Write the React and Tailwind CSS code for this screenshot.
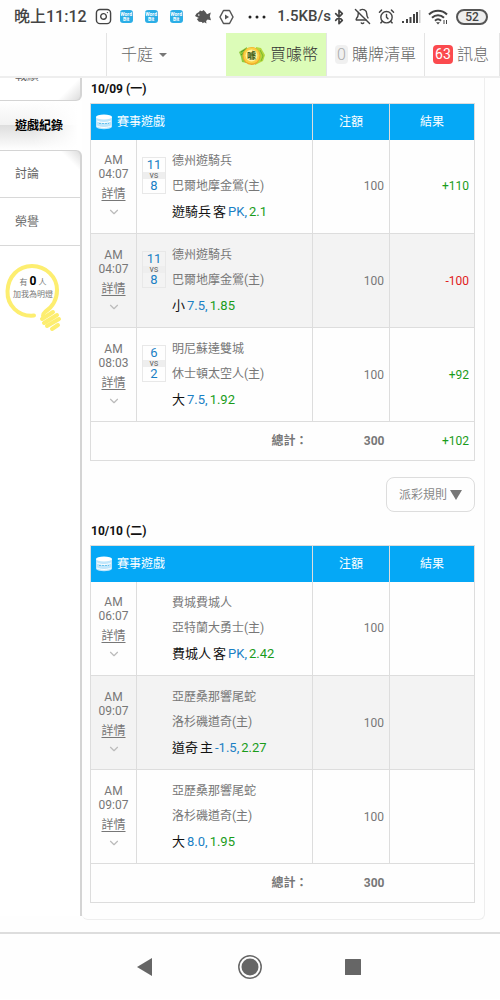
import React from 'react';
import { BellOff, AlarmClock, Bluetooth, ChevronDown, Instagram } from 'lucide-react';

const days = [
  {
    date: '10/09 (一)',
    total: '300',
    totalResult: '+102',
    rows: [
      { time: '04:07', score: ['11', '8'], away: '德州遊騎兵', home: '巴爾地摩金鶯(主)', team: '遊騎兵', pick: '客', line: 'PK,', odds: '2.1', amount: '100', result: '+110' },
      { time: '04:07', score: ['11', '8'], away: '德州遊騎兵', home: '巴爾地摩金鶯(主)', pick: '小', line: '7.5,', odds: '1.85', amount: '100', result: '-100' },
      { time: '08:03', score: ['6', '2'], away: '明尼蘇達雙城', home: '休士頓太空人(主)', pick: '大', line: '7.5,', odds: '1.92', amount: '100', result: '+92' },
    ],
  },
  {
    date: '10/10 (二)',
    total: '300',
    totalResult: '',
    rows: [
      { time: '06:07', away: '費城費城人', home: '亞特蘭大勇士(主)', team: '費城人', pick: '客', line: 'PK,', odds: '2.42', amount: '100', result: '' },
      { time: '09:07', away: '亞歷桑那響尾蛇', home: '洛杉磯道奇(主)', team: '道奇', pick: '主', line: '-1.5,', odds: '2.27', amount: '100', result: '' },
      { time: '09:07', away: '亞歷桑那響尾蛇', home: '洛杉磯道奇(主)', pick: '大', line: '8.0,', odds: '1.95', amount: '100', result: '' },
    ],
  },
];

const WordBit = () => (
  <span className="flex h-[13px] w-[13px] flex-col items-center justify-center rounded-[3px] bg-[#2caee6] text-[5px] font-bold leading-[5px] text-white">
    <span>Word</span>
    <span>Bit</span>
  </span>
);

const StatusBar = () => (
  <div className="flex h-[33px] items-center justify-between pl-3.5 pr-3 text-[#444]">
    <div className="flex items-center gap-2">
      <span className="text-base font-medium">晚上11:12</span>
      <Instagram size={17} strokeWidth={2} />
      <span className="flex items-center gap-3">
        <WordBit />
        <WordBit />
        <WordBit />
      </span>
      <svg width="16" height="14" viewBox="0 0 16 14" className="ml-1" fill="#555">
        <path d="M0 6 1.500 3.500 4 2 5 .5l2 .8L8.500 0l2 2 1.500 2.200 3.800-1.700-1 3.800 1.200 4-3.400-.7-1.500 1.300.4 2.600-2.200-1.200-1.600.9-.8-1.200-3-.3L1.800 9l2-1Z" />
        <circle cx="3.800" cy="5" r="0.800" fill="#fff" />
      </svg>
      <svg width="15" height="16" viewBox="0 0 15 16" fill="none" stroke="#555" strokeWidth="1.500" strokeLinejoin="round">
        <path d="M4.500 1.500h6L14 8l-3.500 6.500h-6L1 8Z" />
        <path d="M6 5.500v5L10 8Z" fill="#555" stroke="none" />
      </svg>
      <svg width="18" height="4" viewBox="0 0 18 4" className="ml-1.5" fill="#222">
        <circle cx="2" cy="2" r="1.500" />
        <circle cx="9" cy="2" r="1.500" />
        <circle cx="16" cy="2" r="1.500" />
      </svg>
    </div>
    <div className="flex items-center gap-[7px]">
      <span className="flex items-center text-[15px] font-medium">
        1.5KB/s
        <Bluetooth size={16} strokeWidth={2.5} />
      </span>
      <BellOff size={17} strokeWidth={2} />
      <AlarmClock size={17} strokeWidth={2} />
      <svg width="19" height="14" viewBox="0 0 19 14" fill="#444">
        <path d="M0 11h2v2H0zM4 9h2v4H4zM7.500 7h2v6h-2zM11 4h2v9h-2zM14 2h2v11h-2z" />
        <path d="M17 0h1.500v13H17z" fill="#ccc" />
      </svg>
      <svg width="21" height="16" viewBox="0 0 21 16" fill="none" stroke="#444" strokeWidth="2">
        <path d="M1 5.500c5-5 13-5 18 0M4 8.800c3.500-3.500 8.500-3.500 12 0M7 11.800c1.800-1.800 4.200-1.800 6 0" />
        <path d="M8 13.200h4L10 15.500Z" fill="#444" stroke="none" />
        <path d="M16 11v4M18.500 11v4" strokeWidth="1" />
      </svg>
      <span className="flex h-4 w-8 items-center justify-center rounded-full border-2 border-[#555] bg-[#eee] text-xs font-medium leading-none">
        52
      </span>
    </div>
  </div>
);

const Coin = () => (
  <svg width="28" height="24" viewBox="0 0 28 24">
    <path d="M1 9 9 4v16l-5-1-1-5Z" fill="#8fcb3f" />
    <path d="M3 9 8 6M3 12l4-3" stroke="#4f9a2a" />
    <path d="m18 4 5 1 4 7-2 6-8 4Z" fill="#b4d83c" />
    <path d="m22 7 3 6-2 5" fill="none" stroke="#7db52e" />
    <circle cx="13.500" cy="13" r="9" fill="#eda92a" />
    <circle cx="13.500" cy="12.500" r="8" fill="#fbd043" />
    <circle cx="13.500" cy="12.500" r="6" fill="#fff3a0" />
    <text x="13.500" y="16" textAnchor="middle" fontSize="9" fontWeight="700" fill="#44601c">噱</text>
  </svg>
);

const TopBar = () => (
  <header className="flex h-[45px] border-b-2 border-[#eee] text-base font-light text-[#666]">
    <div className="w-[107px] border-r border-[#e4e4e4]" />
    <button className="flex flex-1 items-center gap-1.5 pl-3.5">
      千庭
      <svg width="8" height="4" viewBox="0 0 8 4" fill="#777">
        <path d="M0 0h8L4 4Z" />
      </svg>
    </button>
    <a href="#coin" className="flex items-center gap-1 bg-[#dcfcb8] pl-3 pr-2 text-[#333]">
      <Coin />
      買噱幣
    </a>
    <a href="#cart" className="flex items-center gap-1 border-l border-[#e4e4e4] px-2">
      <span className="w-[13px] rounded-sm bg-[#f0f0f0] text-center leading-[19px] text-[#aaa]">0</span>
      購牌清單
    </a>
    <a href="#messages" className="flex items-center gap-1 border-x border-[#e4e4e4] pl-2 pr-2.5">
      <span className="w-5 rounded-sm bg-[#fb4a4e] text-center text-sm font-normal leading-[19px] text-white">63</span>
      訊息
    </a>
  </header>
);

const Lamp = () => (
  <div className="mt-[17px] grid w-[60px] pl-1">
    <svg width="58" height="70" viewBox="0 0 58 70" fill="none" stroke="#fdee70" strokeWidth="4" strokeLinecap="round" className="[grid-area:1/1]">
      <path d="M30 52.500C14 54 3 42 3.500 28 4 14 14 3 28 3s25 11 25 24c0 11-6 18-12 22-2 1.500-2 3-2 4" />
      <path d="m38 56 11-7M40 60l13-8M43 63l12-7M48 66l6-4" />
    </svg>
    <div className="pt-3 text-center text-[8px] leading-[12px] text-[#777] [grid-area:1/1]">
      <div>
        有 <b className="text-xs leading-[12px] text-black">0</b> 人
      </div>
      <div className="whitespace-nowrap">加我為明燈</div>
    </div>
  </div>
);

const Sidebar = () => (
  <nav className="flex w-[82px] shrink-0 flex-col text-xs text-[#666]">
    <div className="flex h-[23px] items-end overflow-hidden rounded-br-md border-b border-r-2 border-[#d4d4d4] bg-[linear-gradient(315deg,#ddd,#fff_16px)]">
      <a href="#record" className="flex h-12 shrink-0 items-center pl-[15px]">戰績</a>
    </div>
    <a
      href="#games"
      className="flex h-[49px] items-center bg-[linear-gradient(to_right,transparent_40%,#fff_95%),linear-gradient(#fff,#f2f2f2_48%,#dedede_50%,#fff)] pl-[15px] font-bold text-black"
    >
      遊戲紀錄
    </a>
    <div className="mb-1 flex-1 rounded-tr-md border-r-2 border-t border-[#d4d4d4] bg-[linear-gradient(225deg,#ddd,#fff_14px)]">
      <a href="#discuss" className="flex h-[47px] items-center border-b border-[#d8d8d8] pl-[15px]">討論</a>
      <a href="#honor" className="flex h-12 items-center border-b border-[#d8d8d8] pl-[15px]">榮譽</a>
      <Lamp />
    </div>
  </nav>
);

const GameIcon = () => (
  <svg width="16" height="16" viewBox="0 0 16 16">
    <path d="M0 3v10c2 3 14 3 16 0V3Z" fill="#bfe6fb" />
    <path d="M1 7c4 2 10 2 14 0M1 12c4 2 10 2 14 0" fill="none" stroke="#fff" />
    <path d="M3 9.500h10" stroke="#69c3ee" strokeDasharray="2 1" />
    <ellipse cx="8" cy="3" rx="8" ry="2.500" fill="#fff" />
  </svg>
);

const Score = ({ score }) => (
  <div className="w-6 border border-[#e8e8e8] text-center text-[13px] leading-[14px] text-[#1a80c4]">
    <div>{score[0]}</div>
    <div className="bg-[#eee] text-[9px] leading-[7px] text-[#666]">vs</div>
    <div>{score[1]}</div>
  </div>
);

const resultColor = (value) => (value.startsWith('-') ? 'text-[#e02020]' : 'text-[#1a9c1a]');

const DayTable = ({ day }) => (
  <section>
    <h2 className="mb-[3px] pl-px text-xs font-bold leading-[22px] text-[#111]">{day.date}</h2>
    <table className="w-full table-fixed border-collapse border border-[#ddd] text-xs text-[#777]">
      <colgroup>
        <col className="w-[46px]" />
        <col />
        <col className="w-[77px]" />
        <col className="w-[85px]" />
      </colgroup>
      <thead>
        <tr className="h-9 bg-[#05a8f6] text-white">
          <th colSpan={2} className="pl-[5px] text-left font-normal">
            <span className="flex items-center gap-[5px]">
              <GameIcon />
              賽事遊戲
            </span>
          </th>
          <th className="border-l border-[#ddd] font-normal">注額</th>
          <th className="border-l border-[#ddd] font-normal">結果</th>
        </tr>
      </thead>
      <tbody>
        {day.rows.map((row, i) => (
          <tr key={i} className="h-[94px] border-b border-[#ddd] even:bg-[#f3f3f3]">
            <td className="text-center leading-[14px]">
              <div>AM</div>
              <div>{row.time}</div>
              <a href="#detail" className="mt-1.5 inline-block underline underline-offset-2">詳情</a>
              <ChevronDown size={14} className="mx-auto mt-1 text-[#bbb]" />
            </td>
            <td className="border-l border-[#ddd] pl-[5px]">
              <div className="flex gap-1.5">
                <div className="w-6 pt-2">{row.score && <Score score={row.score} />}</div>
                <div className="whitespace-nowrap leading-[25px]">
                  <div>{row.away}</div>
                  <div>{row.home}</div>
                  <div className="flex gap-0.5 text-[13px] text-[#111]">
                    {row.team && <span>{row.team}</span>}
                    <span>{row.pick}</span>
                    <span className="text-[#1a80c4]">{row.line}</span>
                    <span className="text-[#1a9c1a]">{row.odds}</span>
                  </div>
                </div>
              </div>
            </td>
            <td className="border-l border-[#ddd] pr-[5px] text-right">{row.amount}</td>
            <td className={`border-l border-[#ddd] pr-[5px] text-right ${resultColor(row.result)}`}>{row.result}</td>
          </tr>
        ))}
      </tbody>
      <tfoot>
        <tr className="h-[39px]">
          <td colSpan={2} className="pr-[5px] text-right font-bold">總計：</td>
          <td className="pr-[5px] text-right font-bold">{day.total}</td>
          <td className="pr-[5px] text-right text-[#1a9c1a]">{day.totalResult}</td>
        </tr>
      </tfoot>
    </table>
  </section>
);

const NavBar = () => (
  <footer className="mt-3 flex h-[67px] items-center justify-center gap-20 border-t-2 border-[#ddd] text-[#666]">
    <button aria-label="Back">
      <svg width="24" height="24" viewBox="0 0 24 24" fill="currentColor">
        <path d="M3 12 18 3v18Z" />
      </svg>
    </button>
    <button aria-label="Home">
      <svg width="24" height="24" viewBox="0 0 24 24" fill="currentColor">
        <circle cx="12" cy="12" r="11.200" fill="none" stroke="currentColor" strokeWidth="1.500" />
        <circle cx="12" cy="12" r="8.500" />
      </svg>
    </button>
    <button aria-label="Recent apps">
      <svg width="24" height="24" viewBox="0 0 24 24" fill="currentColor">
        <rect x="3" y="4" width="16" height="16" rx="0.500" />
      </svg>
    </button>
  </footer>
);

const App = () => {
  return (
    <div className="bg-[#fefefe] font-['Roboto','Noto_Sans_CJK_TC',sans-serif]">
      <StatusBar />
      <TopBar />
      <div className="flex">
        <Sidebar />
        <main className="mr-[15px] min-w-0 flex-1 rounded-b-md border-b border-r border-[#eee] pb-4 pl-2 pr-[9px]">
          <DayTable day={days[0]} />
          <div className="mb-2 mt-4 flex justify-end">
            <button className="flex h-[35px] items-center gap-[3px] rounded-lg border border-[#ddd] px-3 text-xs text-[#888]">
              派彩規則
              <svg width="12" height="10" viewBox="0 0 12 10" fill="#777">
                <path d="M0 0h12L6 10Z" />
              </svg>
            </button>
          </div>
          <DayTable day={days[1]} />
        </main>
      </div>
      <NavBar />
    </div>
  );
};

export default App;
